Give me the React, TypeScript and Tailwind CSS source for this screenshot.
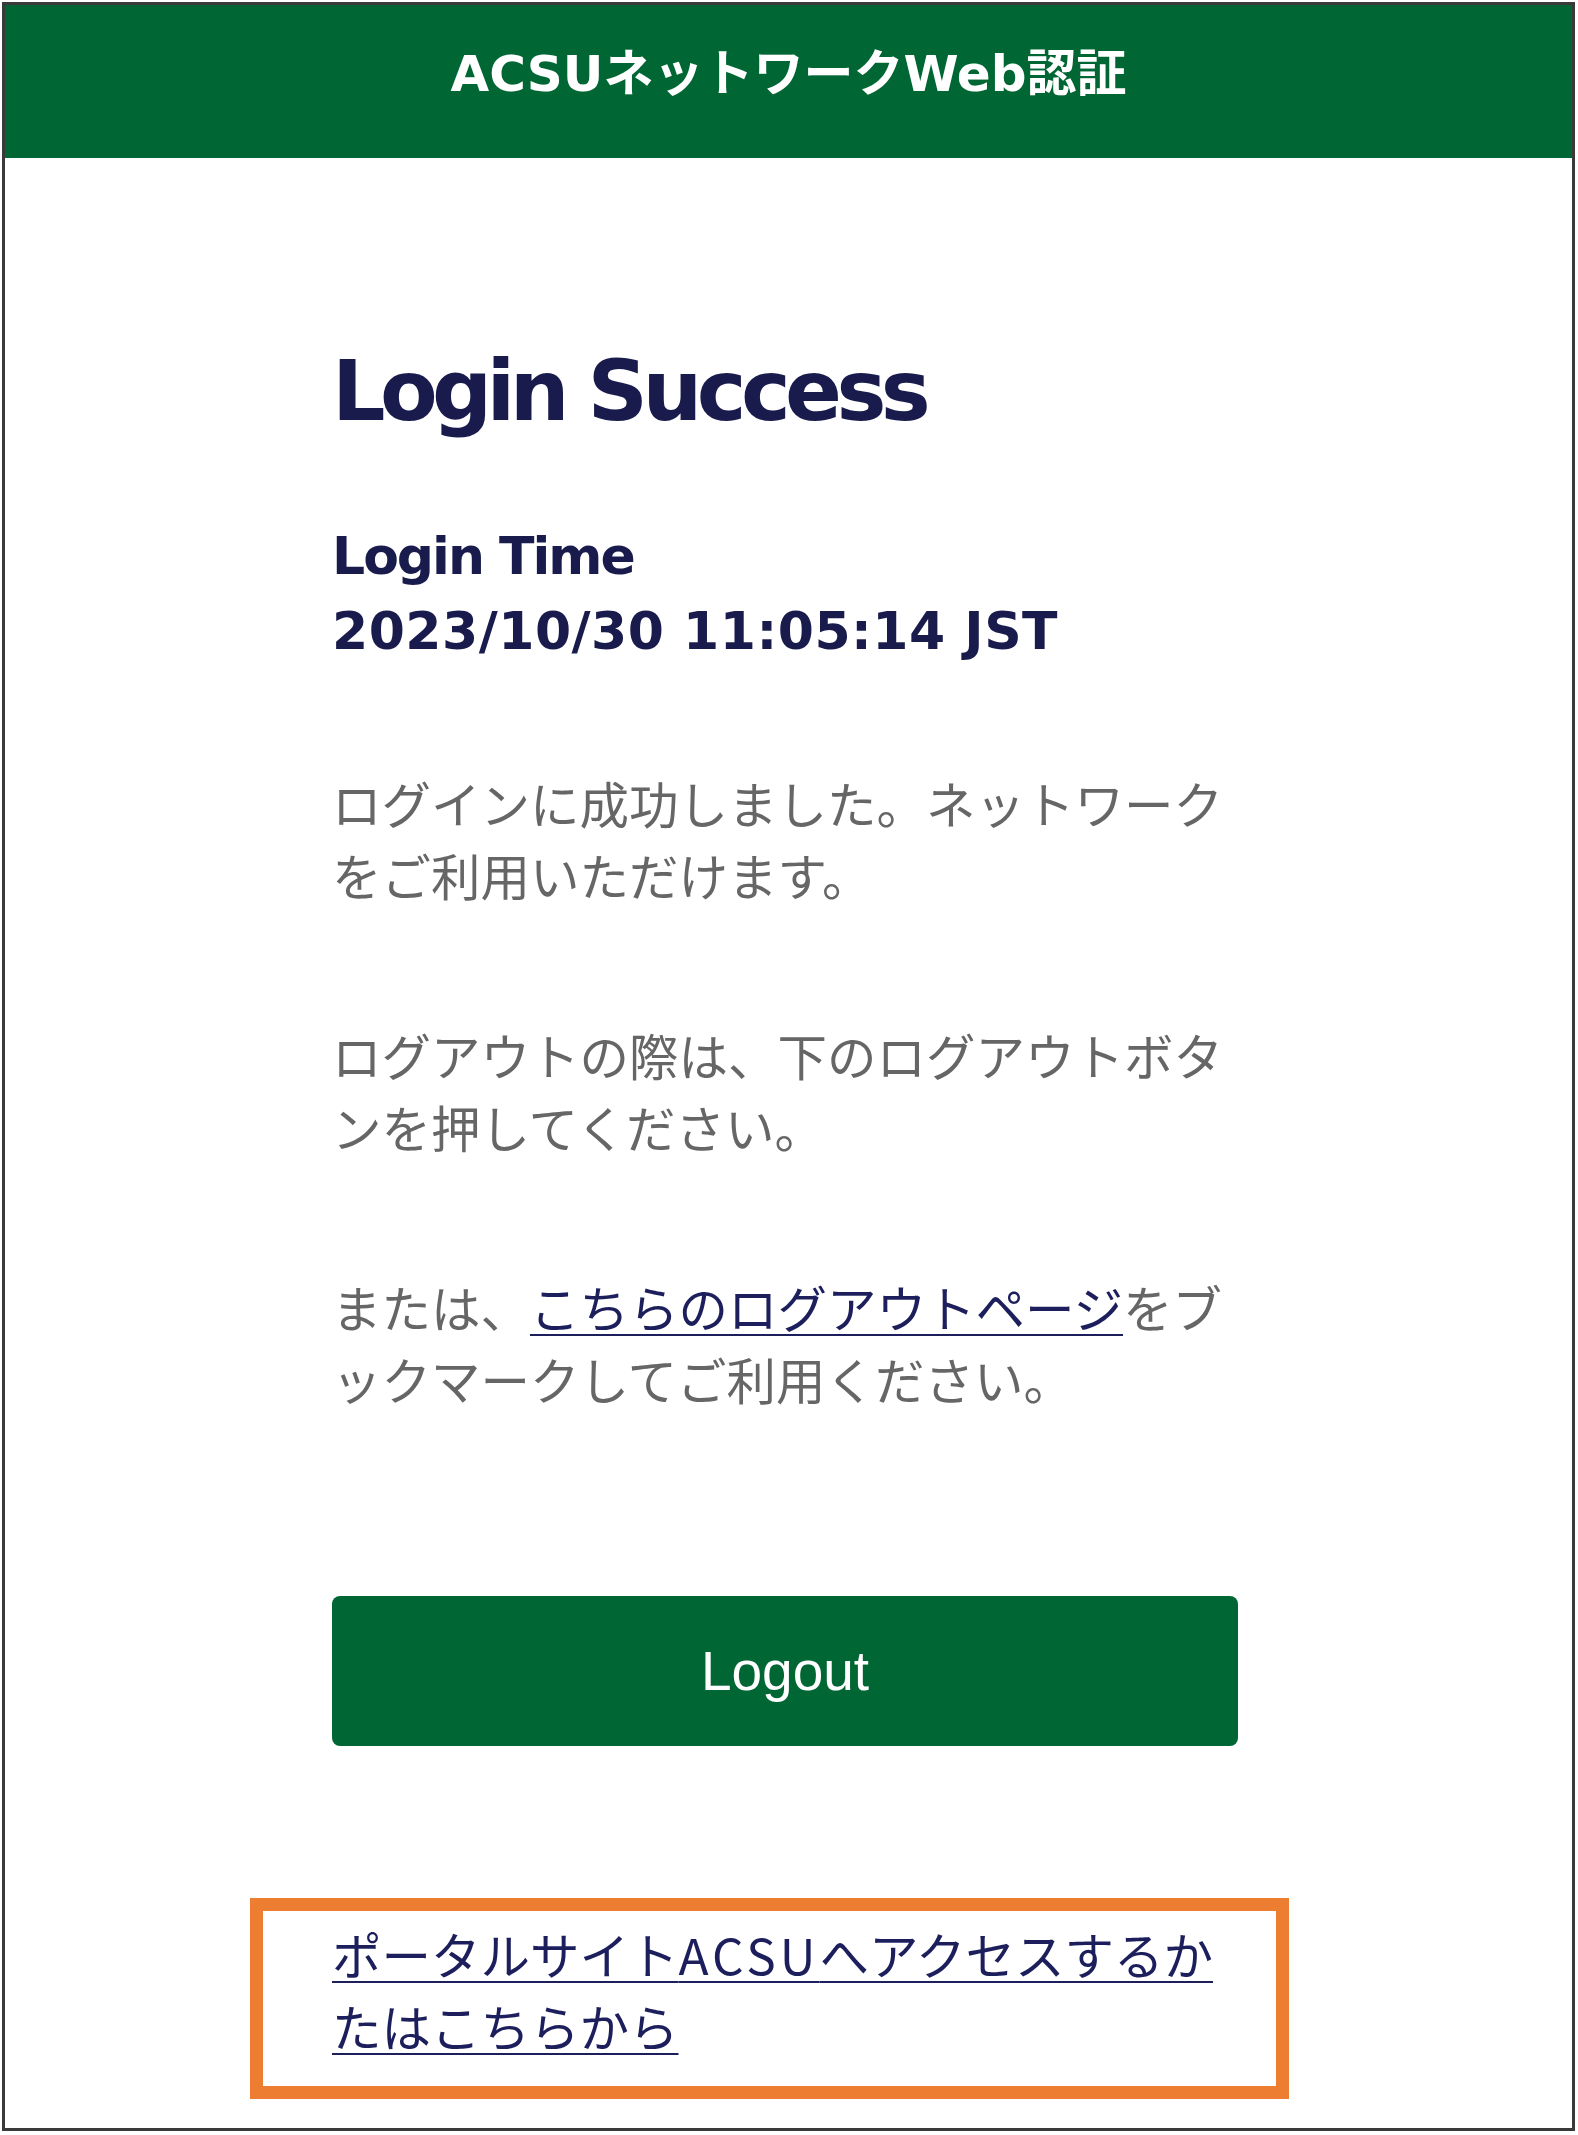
export default function App() {
  return (
    <div className="relative ml-[2px] mt-[2px] w-[1573px] h-[2129px] border-[3px] border-[#3a3a3a] bg-white">
      <header className="h-[153px] bg-[#006633] flex justify-center pt-[39px]">
        <h1 className="text-white font-bold text-[50px] leading-[60px] font-['DejaVu_Sans','Noto_Sans_CJK_JP',sans-serif]">
          ACSUネットワークWeb認証
        </h1>
      </header>
      <main className="pl-[327px] pt-[183px]">
        <h2 className="text-[#181b4b] font-bold text-[84px] leading-[100px] tracking-[-5.6px] font-['DejaVu_Sans',sans-serif]">
          Login Success
        </h2>
        <div className="mt-[78px] text-[#181b4b] font-bold text-[52px] leading-[75px] font-['DejaVu_Sans',sans-serif]">
          <p className="tracking-[-2px]">Login Time</p>
          <p className="tracking-[0.5px]">2023/10/30 11:05:14 JST</p>
        </div>
        <div className="w-[895px] text-[#666666] text-[49.5px] leading-[72px] font-['Noto_Sans_CJK_JP',sans-serif]">
          <p className="mt-[98px]">ログインに成功しました。ネットワークをご利用いただけます。</p>
          <p className="mt-[108px]">ログアウトの際は、下のログアウトボタンを押してください。</p>
          <p className="mt-[108px]">
            または、
            <a href="#" className="text-[#1c1f5c] underline decoration-[2px] underline-offset-[6px]">
              こちらのログアウトページ
            </a>
            をブックマークしてご利用ください。
          </p>
        </div>
        <button className="mt-[181px] w-[906px] h-[150px] rounded-[8px] bg-[#006633] text-white text-[55px] font-['Liberation_Sans',sans-serif] flex items-center justify-center">
          Logout
        </button>
        <p className="mt-[172px] w-[895px] text-[49.5px] leading-[72px] font-['Noto_Sans_CJK_JP',sans-serif]">
          <a href="#" className="text-[#1c1f5c] underline decoration-[2px] underline-offset-[6px]">
            ポータルサイト<span className="tracking-[4px]">ACSU</span>へアクセスするかたはこちらから
          </a>
        </p>
      </main>
      <div className="absolute left-[245px] top-[1893px] w-[1039px] h-[201px] border-[13px] border-[#ED7D31] pointer-events-none" />
    </div>
  );
}
